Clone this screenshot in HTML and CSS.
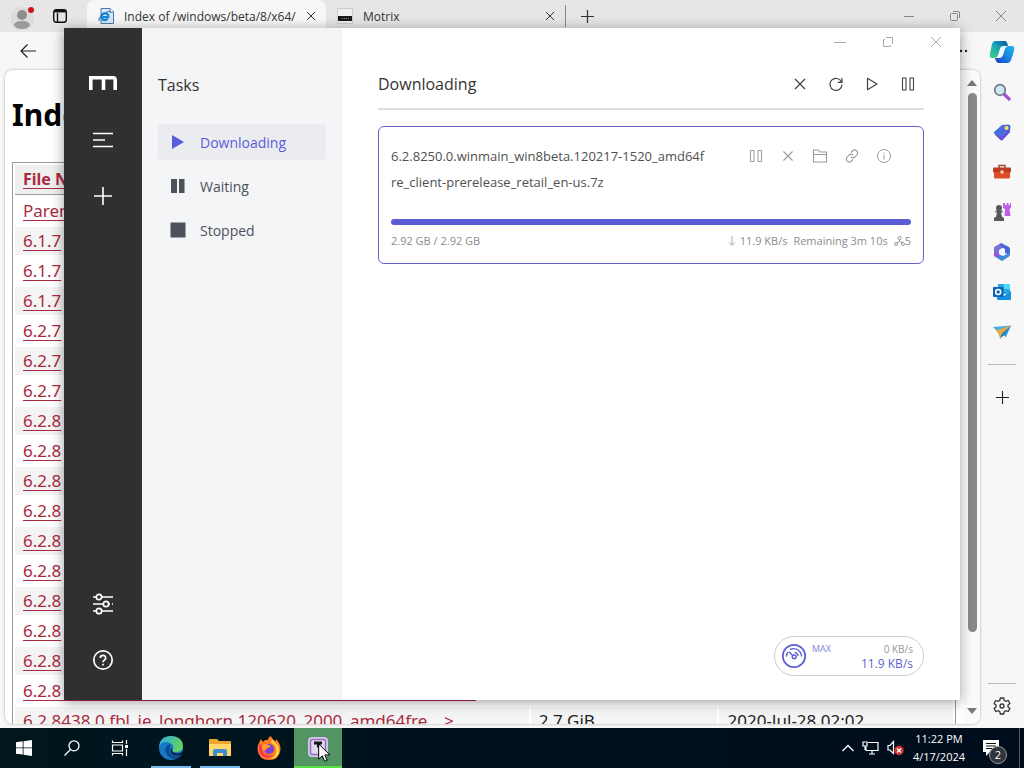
FILE: index.html
```html
<!DOCTYPE html>
<html lang="en">
<head>
<meta charset="utf-8">
<title>Desktop</title>
<link rel="stylesheet" href="styles.css">
</head>
<body>
<div class="desktop">
  <div class="browser">
    <header class="tabbar">
      <button class="profile" aria-label="Profile">
        <svg width="24" height="28" viewBox="0 0 24 28"><circle cx="11" cy="17" r="12" fill="#dcdcdc"/><circle cx="11" cy="13" r="5" fill="#8e8e8e"/><path d="M3 23.500q0-4.500 8-4.500t8 4.500q-3 3.500-8 3.500t-8-3.500z" fill="#9a9a9a"/><circle cx="20" cy="8" r="3" fill="#d0141c"/></svg>
      </button>
      <button class="tab-actions" aria-label="Tab actions">
        <svg width="16" height="16" viewBox="0 0 16 16" fill="none" stroke="#111" stroke-width="1.400"><rect x="1.700" y="1.700" width="12.600" height="12.600" rx="2.500"/><path d="M2 3.500h12M5.500 5v9" /><path d="M2 3h12" stroke-width="2.500"/></svg>
      </button>
      <div class="tab tab-active">
        <svg width="16" height="16" viewBox="0 0 16 16"><path d="M3 .5h9l3.500 3.500v11.500H3z" fill="#d6e8f8" stroke="#4a78ac"/><path d="M12 .5v3.500h3.500" fill="#fff" stroke="#4a78ac"/><path d="M11.500 9.200H3.400q.4 3 3.400 3 1.900 0 2.800-1.300M3.400 8.400q.4-3 3.500-3 3.200 0 3.700 3.200" fill="none" stroke="#1689d8" stroke-width="2.200"/><path d="M1 13q-1.500-4 8-9 4-1.500 3.500 1" fill="none" stroke="#2c6cb8"/></svg>
        <span class="tab-title">Index of /windows/beta/8/x64/</span>
        <button class="tab-close" aria-label="Close tab"><svg width="10" height="10" viewBox="0 0 10 10" stroke="#333"><path d="M1 1l8 8M9 1l-8 8"/></svg></button>
      </div>
      <div class="tab">
        <svg width="16" height="16" viewBox="0 0 16 16"><rect x=".5" y=".5" width="15" height="15" fill="#eee" stroke="#ccc"/><path d="M1 8h14v5H1z" fill="#16181a"/><path d="M5 10.500h8" stroke="#888" stroke-dasharray="1 1"/></svg>
        <span class="tab-title">Motrix</span>
        <button class="tab-close" aria-label="Close tab"><svg width="10" height="10" viewBox="0 0 10 10" stroke="#333"><path d="M1 1l8 8M9 1l-8 8"/></svg></button>
      </div>
      <button class="new-tab" aria-label="New tab"><svg width="15" height="15" viewBox="0 0 15 15" stroke="#333" stroke-width="1.200"><path d="M7.500 1v13M1 7.500h13"/></svg></button>
      <div class="captions">
        <button aria-label="Minimize"><svg width="10" height="10" viewBox="0 0 10 10" stroke="#888"><path d="M0 5.500h10"/></svg></button>
        <button aria-label="Restore"><svg width="12" height="12" viewBox="0 0 12 12" fill="none" stroke="#888"><rect x="1.500" y="3.500" width="7" height="7" rx="1"/><path d="M4 1.500h5q1.500 0 1.500 1.500v5"/></svg></button>
        <button aria-label="Close"><svg width="12" height="12" viewBox="0 0 12 12" stroke="#888"><path d="M1 1l10 10M11 1L1 11"/></svg></button>
      </div>
    </header>
    <div class="browser-body">
      <div class="browser-main">
        <div class="toolbar">
          <button aria-label="Back"><svg width="18" height="16" viewBox="0 0 18 16" fill="none" stroke="#222" stroke-width="1.200"><path d="M17 8H2M8.500 1.500L2 8l6.500 6.500"/></svg></button>
          <button aria-label="More"><svg width="14" height="4" viewBox="0 0 14 4" fill="#222"><circle cx="2" cy="2" r="1.200"/><circle cx="7" cy="2" r="1.200"/><circle cx="12" cy="2" r="1.200"/></svg></button>
        </div>
        <div class="page">
          <div class="page-content">
            <h1>Index</h1>
            <table class="listing">
              <thead><tr><th class="col-name"><a href="#">File Name</a></th><th class="col-size"></th><th></th></tr></thead>
              <tbody>
                <tr><td><a href="#">Parent</a></td><td></td><td></td></tr>
                <tr><td><a href="#">6.1.7</a></td><td></td><td></td></tr>
                <tr><td><a href="#">6.1.7</a></td><td></td><td></td></tr>
                <tr><td><a href="#">6.1.7</a></td><td></td><td></td></tr>
                <tr><td><a href="#">6.2.7</a></td><td></td><td></td></tr>
                <tr><td><a href="#">6.2.7</a></td><td></td><td></td></tr>
                <tr><td><a href="#">6.2.7</a></td><td></td><td></td></tr>
                <tr><td><a href="#">6.2.8</a></td><td></td><td></td></tr>
                <tr><td><a href="#">6.2.8</a></td><td></td><td></td></tr>
                <tr><td><a href="#">6.2.8</a></td><td></td><td></td></tr>
                <tr><td><a href="#">6.2.8</a></td><td></td><td></td></tr>
                <tr><td><a href="#">6.2.8</a></td><td></td><td></td></tr>
                <tr><td><a href="#">6.2.8</a></td><td></td><td></td></tr>
                <tr><td><a href="#">6.2.8</a></td><td></td><td></td></tr>
                <tr><td><a href="#">6.2.8</a></td><td></td><td></td></tr>
                <tr><td><a href="#">6.2.8</a></td><td></td><td></td></tr>
                <tr><td><a href="#" class="long">6.2.8</a></td><td></td><td></td></tr>
                <tr><td><a href="#">6.2.8438.0.fbl_ie_longhorn.120620_2000_amd64fre_..&gt;</a></td><td>2.7 GiB</td><td>2020-Jul-28 02:02</td></tr>
              </tbody>
            </table>
          </div>
          <div class="scrollbar">
            <svg width="10" height="6" viewBox="0 0 10 6"><path d="M0 6L5 0l5 6z" fill="#777"/></svg>
            <div class="thumb"></div>
            <svg class="arrow-down" width="10" height="6" viewBox="0 0 10 6"><path d="M0 0l5 6 5-6z" fill="#777"/></svg>
          </div>
        </div>
      </div>
      <aside class="sidebar">
        <button aria-label="Copilot"><svg width="26" height="24" viewBox="0 0 26 24"><defs><linearGradient id="ca" x1="0" y1="1" x2="1" y2="0"><stop offset="0" stop-color="#4fd07a"/><stop offset=".5" stop-color="#17a8b8"/><stop offset="1" stop-color="#0a4f9c"/></linearGradient><linearGradient id="cb" x1="0" y1="1" x2="1" y2="0"><stop offset="0" stop-color="#2038c8"/><stop offset=".5" stop-color="#1786e0"/><stop offset="1" stop-color="#22b4f2"/></linearGradient></defs><path d="M6 1h10q2 0 3 5h-4q-3 0-4 3l-2 6q-1 3-4 3H3Q0 18 1 13L3 4q1-3 3-3z" fill="url(#ca)"/><path d="M19 23h-9q-3 0-4-5h4q3 0 4-3l2-6q1-3 4-3h3q3 0 2 5l-3 9q-1 3-3 3z" fill="url(#cb)"/><path d="M12 7q2-1 4 0-1 1-2 5-1 5-5 5 1-1 1.500-5Q11 8 12 7z" fill="#eefaff"/></svg></button>
        <button aria-label="Search"><svg width="18" height="18" viewBox="0 0 18 18"><path d="M11 11l5 5" stroke="#a750d8" stroke-width="3.200" stroke-linecap="round"/><circle cx="7" cy="7" r="5.300" fill="#cfe6f4" stroke="#707880" stroke-width="1.700"/></svg></button>
        <button aria-label="Shopping"><svg width="18" height="18" viewBox="0 0 18 18"><path d="M1 9l8-7 7-.5 1.500 1.500-.5 6-7.500 8q-1 .7-2 0L1.500 11q-1-1-.5-2z" fill="#4a6ce0"/><path d="M1.500 11l6 6q1 .7 2 0L17 9V6L8 14z" fill="#6654d8"/><circle cx="13.500" cy="5" r="2" fill="#ffe35a"/></svg></button>
        <button aria-label="Tools"><svg width="18" height="16" viewBox="0 0 18 16"><path d="M6 4V1.500h6V4" fill="none" stroke="#9a4a35" stroke-width="1.500"/><rect y="3.500" width="18" height="5" rx="1" fill="#b93c20"/><path d="M1 8h16v5q0 1.500-1.500 1.500h-13Q1 14.500 1 13z" fill="#dc4d23"/><rect x="7.500" y="6.500" width="3" height="3" fill="#f5d9bd"/></svg></button>
        <button aria-label="Games"><svg width="18" height="18" viewBox="0 0 18 18"><path d="M10 0h2v2h1.500V0h2v2H17V0h1v5l-1.500 1 1 7h-6l.5-7L10 5z" fill="#c060e8"/><circle cx="6" cy="5" r="3" fill="#55595c"/><path d="M2.500 7.500h7v2H8l.8 4 2.200 1.500V18H1v-3l2.200-1.500.8-4H2.500z" fill="#55595c"/></svg></button>
        <button aria-label="Microsoft 365"><svg width="18" height="18" viewBox="0 0 18 18"><path d="M8 0L2 3.500Q1 4 1 5.500v7L6 14V7l6-3.500z" fill="#7b72d8"/><path d="M8 0l8 4q1 .5 1 2v6l-5-2V6L7.500 3.500z" fill="#4868d8"/><path d="M17 11.500q0 1.500-1 2L10 17.500q-1 .7-2 0L1 13l5-2 4 2 6-3z" fill="#4189db"/><path d="M1 9l5 2v3L2 13.500Q1 13 1 12z" fill="#9d51d5"/><path d="M9 5.500L12 7.200v3.600L9 12.500l-3-1.700V7.200z" fill="#f4f7ff"/></svg></button>
        <button aria-label="Outlook"><svg width="18" height="18" viewBox="0 0 18 18"><path d="M5 1h12v10H5z" fill="#28a8ea"/><path d="M11 1h6v5h-6z" fill="#50d9ff"/><path d="M4 9l7 4 7-5v8q0 1-1 1H5q-1 0-1-1z" fill="#1490df"/><rect y="4" width="10.500" height="10" rx="1" fill="#0f63b5"/><circle cx="5.200" cy="9" r="2.500" fill="none" stroke="#fff" stroke-width="1.600"/></svg></button>
        <button aria-label="Drop"><svg width="18" height="16" viewBox="0 0 18 16"><path d="M0 3l18-1.500L5 8z" fill="#46aee8"/><path d="M18 1.500L13 13 8 10z" fill="#3a98dc"/><path d="M3 6.500l15-5L8.500 10 7 14.500 5 9z" fill="#e8a93e"/><path d="M18 1.500L8.500 10 7 15l3.500-3.500z" fill="#277bb8"/></svg></button>
        <hr>
        <button class="side-add" aria-label="Add"><svg width="13" height="13" viewBox="0 0 13 13" stroke="#222" stroke-width="1.100"><path d="M6.500 0v13M0 6.500h13"/></svg></button>
        <hr class="push">
        <button class="side-settings" aria-label="Settings"><svg width="18" height="18" viewBox="0 0 18 18" fill="none" stroke="#333" stroke-width="1.300" stroke-linejoin="round"><path d="M7.300 1h3.400l.5 2.400 1.600.9 2.400-.8 1.700 3-1.900 1.600v1.800l1.900 1.600-1.700 3-2.400-.8-1.600.9-.5 2.400H7.300l-.5-2.400-1.600-.9-2.400.8-1.700-3L3 9.900V8.100L1.100 6.500l1.700-3 2.400.8 1.600-.9z"/><circle cx="9" cy="9" r="2"/></svg></button>
      </aside>
    </div>
  </div>

  <section class="motrix">
    <nav class="rail">
      <svg class="logo" width="28" height="14" viewBox="0 0 28 14" fill="none" stroke="#fff" stroke-width="3.600"><path d="M1.800 14V1.800H24q2.200 0 2.200 2.200v10M14.500 2v12"/></svg>
      <button aria-label="Task list"><svg width="22" height="16" viewBox="0 0 22 16" stroke="#fff" stroke-width="1.600"><path d="M1 1.500h20M1 8h12M1 14.500h20"/></svg></button>
      <button aria-label="Add task"><svg width="20" height="20" viewBox="0 0 20 20" stroke="#fff" stroke-width="1.600"><path d="M10 1v18M1 10h18"/></svg></button>
      <button class="push" aria-label="Preferences"><svg width="22" height="22" viewBox="0 0 22 22" fill="none" stroke="#fff" stroke-width="1.700"><path d="M1 4h3M10 4h11M1 11h10M17 11h1M20 11h1M1 18h3M10 18h11"/><circle cx="7" cy="4" r="2.700"/><circle cx="14" cy="11" r="2.700"/><circle cx="7" cy="18" r="2.700"/></svg></button>
      <button aria-label="Help"><svg width="22" height="22" viewBox="0 0 22 22" fill="none" stroke="#fff" stroke-width="1.700"><circle cx="11" cy="11" r="9.200"/><path d="M8.300 9q0-2.700 2.700-2.700T13.700 9q0 1.500-1.500 2.200Q11 11.800 11 13.300M11 14.800v1.600"/></svg></button>
    </nav>
    <aside class="subnav">
      <h2>Tasks</h2>
      <a href="#" class="nav-item current"><svg width="16" height="16" viewBox="0 0 16 16"><path d="M2 1l12 7-12 7z" fill="#5b5be0"/></svg>Downloading</a>
      <a href="#" class="nav-item"><svg width="16" height="16" viewBox="0 0 16 16"><path d="M1 1h6v14H1zM9 1h5.500v14H9z" fill="#4d515a"/></svg>Waiting</a>
      <a href="#" class="nav-item"><svg width="16" height="16" viewBox="0 0 16 16"><path d="M.5.500h15v15H.5z" fill="#4d515a"/></svg>Stopped</a>
    </aside>
    <main class="panel">
      <div class="win-controls">
        <button aria-label="Minimize"><svg width="12" height="12" viewBox="0 0 12 12" stroke="#aaa"><path d="M0 6.500h12"/></svg></button>
        <button aria-label="Maximize"><svg width="12" height="12" viewBox="0 0 12 12" fill="none" stroke="#aaa"><path d="M4 1.500h6.500V8M1.500 4v6.500H8M1.500 4v-.5H3M8.500 10.500V9"/></svg></button>
        <button aria-label="Close"><svg width="12" height="12" viewBox="0 0 12 12" stroke="#aaa"><path d="M1 1l10 10M11 1L1 11"/></svg></button>
      </div>
      <header class="panel-head">
        <h2>Downloading</h2>
        <div class="tools">
          <button aria-label="Delete"><svg width="14" height="14" viewBox="0 0 14 14" stroke="#444" stroke-width="1.300"><path d="M2 2l10 10M12 2L2 12"/></svg></button>
          <button aria-label="Refresh"><svg width="14" height="14" viewBox="0 0 14 14" fill="none" stroke="#444" stroke-width="1.200"><path d="M12.500 5A6 6 0 1 0 13 7.500M13 1v4.300H8.800"/></svg></button>
          <button aria-label="Resume all"><svg width="14" height="14" viewBox="0 0 14 14" fill="none" stroke="#444" stroke-width="1.200" stroke-linejoin="round"><path d="M2.500 1.300l9.500 5.700-9.500 5.700z"/></svg></button>
          <button aria-label="Pause all"><svg width="14" height="14" viewBox="0 0 14 14" fill="none" stroke="#444" stroke-width="1.100"><path d="M1.500 1h3.500v12H1.500zM9 1h3.500v12H9z"/></svg></button>
        </div>
      </header>
      <article class="task">
        <div class="task-top">
          <h3>6.2.8250.0.winmain_win8beta.120217-1520_amd64fre_client-prerelease_retail_en-us.7z</h3>
          <div class="task-actions">
            <button aria-label="Pause"><svg width="14" height="14" viewBox="0 0 14 14" fill="none" stroke="#999"><path d="M1.500 1.500h3.500v11H1.500zM9 1.500h3.500v11H9z"/></svg></button>
            <button aria-label="Delete"><svg width="14" height="14" viewBox="0 0 14 14" stroke="#999" stroke-width="1.100"><path d="M2.500 2.500l9 9M11.500 2.500l-9 9"/></svg></button>
            <button aria-label="Open folder"><svg width="16" height="16" viewBox="0 0 16 16" fill="none" stroke="#999" stroke-width="1.100"><path d="M1.500 14V2h5l1.500 2h6.500v10zM1.500 6.500h13"/></svg></button>
            <button aria-label="Copy link"><svg width="14" height="14" viewBox="0 0 14 14" fill="none" stroke="#999" stroke-width="1.100"><path d="M6 3.500l2-2q1.700-1.300 3.700.4 1.800 2 .3 3.900L9.500 8.300q-1.800 1.300-3.600-.3M8 10.500l-2 2q-1.700 1.300-3.700-.4-1.800-2-.3-3.900L4.500 5.700q1.800-1.300 3.600.3"/></svg></button>
            <button aria-label="Details"><svg width="16" height="16" viewBox="0 0 16 16" fill="none" stroke="#999"><circle cx="8" cy="8" r="6.500"/><path d="M8 7v4.500M8 4.500v1.200"/></svg></button>
          </div>
        </div>
        <div class="progress" role="progressbar" aria-valuenow="100" aria-label="Progress"></div>
        <div class="task-info">
          <span>2.92 GB / 2.92 GB</span>
          <div class="stats">
            <svg width="8" height="12" viewBox="0 0 8 12" fill="none" stroke="#aaa"><path d="M4 1v9M1 7.500l3 3 3-3"/></svg>
            <span class="speed">11.9 KB/s</span>
            <span class="remain">Remaining 3m 10s</span>
            <svg width="11" height="12" viewBox="0 0 11 12" fill="none" stroke="#999"><circle cx="5.500" cy="3" r="1.600"/><circle cx="2" cy="9" r="1.500"/><circle cx="9" cy="9" r="1.500"/><path d="M5.500 4.600v2L2.800 7.700M5.500 6.600l2.700 1.100"/></svg>
            <span>5</span>
          </div>
        </div>
      </article>
      <div class="speedometer">
        <svg width="26" height="26" viewBox="0 0 26 26" fill="none" stroke="#5f5fd4" stroke-width="1.700"><circle cx="13" cy="13" r="11.200"/><path d="M5.400 13.500q0-2.500 1.600-4.500M9 6.500q4.500-2 8 .5 3.500 2.500 3.600 6.500M8 8.800l3.700 3.700" stroke-width="1.400"/><path d="M13.500 9.300q3 .5 3.700 3.700" stroke-width="1.200"/><circle cx="13.200" cy="13.800" r="1.900" stroke-width="1.500"/></svg>
        <span class="max">MAX</span>
        <div class="rates"><span class="up">0 KB/s</span><span class="down">11.9 KB/s</span></div>
      </div>
    </main>
  </section>

  <footer class="taskbar">
    <button aria-label="Start"><svg width="16" height="16" viewBox="0 0 16 16" fill="#fff"><path d="M0 2.300L6.700 1.300v6.200H0zM7.500 1.200L16 0v7.500H7.500zM0 8.300h6.700v6.300L0 13.700zM7.500 8.300H16V16l-8.500-1.200z"/></svg></button>
    <button aria-label="Search"><svg width="16" height="16" viewBox="0 0 16 16" fill="none" stroke="#fff" stroke-width="1.300"><circle cx="10" cy="5.800" r="5"/><path d="M6.500 9.500L.5 15.500"/></svg></button>
    <button aria-label="Task view"><svg width="18" height="16" viewBox="0 0 18 16" fill="none" stroke="#fff" stroke-width="1.200"><path d="M1.500.5v2h10v-2M1.500 15.500v-2h10v2M1.500 5h10v6h-10zM15.500 0v4M15.500 9v7"/><path d="M14 5h3v3h-3z" fill="#fff" stroke="none"/></svg></button>
    <div class="apps">
      <button class="open" aria-label="Edge"><svg width="24" height="24" viewBox="0 0 24 24"><defs><linearGradient id="ea" x1="0" y1="0" x2="1" y2=".3"><stop offset="0" stop-color="#2da8df"/><stop offset="1" stop-color="#62d463"/></linearGradient></defs><circle cx="12" cy="12" r="12" fill="#1778c8"/><path d="M0 11Q1 0 12 0q11 0 12 10 0 6-7 6-4 0-3.500-2 2-2 0-5Q11 6 7 6 2 6 0 11z" fill="url(#ea)"/><path d="M9 9q-4 3-2 8 3 6 10 6 4-1 6-5-4 3-9 1-5-2-3-8 1-2 0-3z" fill="#0c4b8c"/><path d="M13 12q-1 3 2 5 4 2 8-1l1-1v3l-4 1q-6 1-8-3-1-3 1-4z" fill="#04162a"/></svg></button>
      <button class="open" aria-label="File Explorer"><svg width="22" height="20" viewBox="0 0 22 20"><path d="M0 2q0-1 1-1h7l2 2h11q1 0 1 1v14H0z" fill="#e8a72e"/><path d="M0 6h22v12H0z" fill="#ffd66b"/><path d="M4 18v-5q0-2 2-2h10q2 0 2 2v5h-4v-3H8v3z" fill="#3b8fd0"/></svg></button>
      <button aria-label="Firefox"><svg width="24" height="24" viewBox="0 0 24 24"><path d="M2 7l2-4 2 3q2-3 5-2 0-3 3-4 1 4 5 5V3q5 5 4.500 11Q22 24 12 24T.5 14Q0 10 2 7z" fill="#ff7a24"/><path d="M15 2q1 4 5 6 3 4 2 9-2 6-9 6 7-3 6-10-1-5-5-6z" fill="#ffd13e"/><path d="M2 9q-1 9 5 12 6 2 10-2-8 2-11-3-2-4 1-8z" fill="#f23950"/><circle cx="12" cy="13" r="5" fill="#7b3fd6"/><path d="M5 9q3-2 6 0l3 1q-1 2-4 2l-2 3Q4 13 5 9z" fill="#ff9b2f"/></svg></button>
      <button class="open active" aria-label="Motrix"><svg width="20" height="20" viewBox="0 0 20 20"><rect width="20" height="20" rx="4" fill="#d8c4ee"/><rect x="2.500" y="2.500" width="15" height="15" rx="2" fill="#e2d6ee" stroke="#9274b8" stroke-width="1.500"/><path d="M6 4.500h8v3h-2v3H9v-3H6z" fill="#1b1622"/></svg></button>
    </div>
    <div class="tray">
      <svg width="12" height="8" viewBox="0 0 12 8" fill="none" stroke="#fff" stroke-width="1.300"><path d="M.5 7L6 1.500 11.500 7"/></svg>
      <svg width="17" height="14" viewBox="0 0 17 14" fill="none" stroke="#fff" stroke-width="1.200"><path d="M6 1.500h10v8H4V6M7 13h6M10 9.500V13M1 1h4v4H1zM3 5v4"/></svg>
      <svg width="17" height="16" viewBox="0 0 17 16"><path d="M1 5.500h2l3.500-4v12L3 10H1z" fill="none" stroke="#fff" stroke-width="1.200"/><circle cx="12" cy="10.500" r="4.700" fill="#d13438"/><path d="M10 8.500l4 4M14 8.500l-4 4" stroke="#fff" stroke-width="1.200"/></svg>
    </div>
    <time class="clock" datetime="2024-04-17T23:22"><span>11:22 PM</span><span>4/17/2024</span></time>
    <button class="notify" aria-label="Notifications, 2 new">
      <svg width="16" height="16" viewBox="0 0 16 16"><path d="M0 0h16v12H7l-4 4v-4H0z" fill="#fff"/><path d="M3 3.500h10M3 6h10M3 8.500h10" stroke="#08101c"/></svg>
      <span class="badge">2</span>
    </button>
    <svg class="cursor" width="13" height="20" viewBox="0 0 13 20"><path d="M.7.900v15.300l3.600-3.400 2.400 5.600 2.500-1.100-2.400-5.400h5z" fill="#fff" stroke="#000"/></svg>
  </footer>
</div>
</body>
</html>
```
FILE: styles.css
```css
* { box-sizing: border-box; }
body { margin: 0; font-family: "Open Sans", "Noto Sans", sans-serif; font-size: 12px; color: #333; }
button { display: flex; align-items: center; justify-content: center; padding: 0; border: 0; background: none; font: inherit; color: inherit; }
svg { display: block; flex: none; }
h1, h2, h3 { margin: 0; font-weight: 400; }
.push { margin-top: auto; }

.desktop { position: relative; display: flex; flex-direction: column; height: 100vh; overflow: hidden; }
.browser { flex: 1; min-height: 0; display: flex; flex-direction: column; background: #f7f7f7; }

.tabbar { flex: none; display: flex; height: 32px; background: #e6e6e6; }
.profile { width: 24px; margin-left: 11px; overflow: hidden; }
.tab-actions { width: 16px; margin: 0 19px 0 17px; }
.tab { display: flex; align-items: center; gap: 10px; width: 239px; padding: 0 10px 0 11px; }
.tab-active { background: #f7f7f7; border-radius: 8px 8px 0 0; }
.tab-title { flex: 1; white-space: nowrap; }
.tab-close { width: 10px; height: 16px; }
.new-tab { width: 43px; border-left: 1px solid #888; height: 22px; margin-top: 5px; }
.captions { display: flex; margin-left: auto; }
.captions button { width: 46px; }

.browser-body { flex: 1; min-height: 0; display: flex; }
.browser-main { flex: 1; min-width: 0; display: flex; flex-direction: column; padding: 0 0 4px 5px; }
.toolbar { flex: none; display: flex; align-items: center; justify-content: space-between; height: 38px; padding: 0 12px 0 14px; }
.page { flex: 1; min-height: 0; display: flex; overflow: hidden; background: #fff; border-radius: 8px; box-shadow: 0 0 3px rgba(0, 0, 0, 0.3); }
.page-content { flex: 1; min-width: 0; padding: 20px 8px 0 7px; font-family: "Noto Sans", sans-serif; font-size: 17px; color: #222; }
.page-content h1 { height: 72px; font-size: 30px; line-height: 50px; font-weight: 700; color: #000; }
.listing { width: 100%; table-layout: fixed; border: 1px solid #999; border-spacing: 2px; }
.listing th, .listing td { height: 28px; padding: 0 8px; line-height: 28px; text-align: left; vertical-align: top; white-space: nowrap; }
.listing th { height: 30px; background: #efefef; border-bottom: 1px solid #999; font-size: 16px; }
.listing tbody tr:nth-child(even) td { background: #f4f4f4; }
.listing a { color: #a92a40; text-underline-offset: 3px; text-decoration-thickness: 1px; }
.listing .long { display: block; width: 91%; height: 24px; border-bottom: 1px solid #a92a40; text-decoration: none; }
.col-name { width: 55%; }
.col-size { width: 20%; }
.scrollbar { flex: none; display: flex; flex-direction: column; align-items: center; width: 16px; padding: 10px 0; background: #fafafa; }
.thumb { width: 9px; height: 85%; margin-top: 7px; border-radius: 5px; background: #898989; }
.arrow-down { margin-top: auto; }

.sidebar { flex: none; display: flex; flex-direction: column; align-items: center; width: 44px; }
.sidebar button { width: 40px; height: 40px; }
.sidebar hr { width: 28px; margin-bottom: 0; border: 0; border-top: 1px solid #bbb; }
.sidebar hr:not(.push) { margin-top: 12px; }
.sidebar .side-add { margin-top: 12px; }
.sidebar .side-settings { height: 44px; }

.motrix { position: absolute; top: 28px; right: 64px; bottom: 68px; left: 64px; display: flex; background: #fff; box-shadow: 0 2px 12px rgba(0, 0, 0, 0.4); }
.rail { flex: none; display: flex; flex-direction: column; align-items: center; width: 78px; padding: 48px 0 12px; background: #303030; }
.logo { margin-bottom: 22px; }
.rail button { width: 56px; height: 56px; }
.subnav { flex: none; width: 200px; padding: 44px 16px 0; background: #f4f5f7; }
.subnav h2 { margin-bottom: 26px; font-size: 16px; line-height: 26px; }
.nav-item { display: flex; align-items: center; gap: 14px; height: 36px; margin-bottom: 8px; padding: 0 12px; border-radius: 3px; font-size: 14px; color: #4d515a; text-decoration: none; }
.nav-item.current { color: #5b5bdc; background: #eaecf0; }

.panel { flex: 1; min-width: 0; display: flex; flex-direction: column; padding: 0 36px 24px; }
.win-controls { display: flex; justify-content: flex-end; margin-right: -36px; }
.win-controls button { width: 48px; height: 28px; }
.panel-head { display: flex; align-items: center; justify-content: space-between; height: 54px; padding-top: 4px; margin-bottom: 16px; border-bottom: 2px solid #ddd; }
.panel-head h2 { font-size: 16px; }
.tools { display: flex; gap: 22px; padding-right: 9px; }
.task { padding: 16px 12px 13px; border: 1px solid #6464c8; border-radius: 6px; }
.task-top { display: flex; justify-content: space-between; margin-bottom: 24px; }
.task h3 { width: 316px; font-size: 13px; line-height: 26px; color: #505050; word-break: break-all; }
.task-actions { display: flex; align-items: center; height: 26px; padding-right: 11px; }
.task-actions button { width: 32px; height: 24px; }
.progress { height: 6px; border-radius: 3px; background: #5b5bd6; }
.task-info { display: flex; align-items: center; justify-content: space-between; margin-top: 7px; font-size: 11px; line-height: 18px; color: #8c8c8c; }
.stats { display: flex; align-items: center; }
.speed { margin: 0 6px 0 4px; }
.remain { margin-right: 6px; }
.speedometer { display: flex; align-self: flex-end; width: 150px; height: 40px; margin-top: auto; padding: 6px 10px 0 6px; border: 1px solid #ccc; border-radius: 20px; }
.max { margin-left: 5px; font-size: 9px; line-height: 12px; color: #8484d8; }
.rates { display: flex; flex-direction: column; align-items: flex-end; margin-left: auto; }
.up { font-size: 10px; line-height: 12px; color: #999; }
.down { font-size: 12px; line-height: 17px; color: #5f5fd4; }

.taskbar { position: relative; flex: none; display: flex; height: 40px; background: linear-gradient(90deg, #00171e, #000c1c); color: #fff; }
.taskbar button { width: 48px; height: 40px; }
.apps { display: flex; gap: 1px; margin-left: 3px; }
.apps .open { background: linear-gradient(#76b9ed, #76b9ed) center bottom / 40px 2px no-repeat; }
.apps .active { background: #539463; border-bottom: 2px solid #55e043; }
.tray { display: flex; align-items: center; gap: 8px; margin-left: auto; }
.clock { display: flex; flex-direction: column; align-items: center; justify-content: center; width: 70px; font-size: 11px; line-height: 18px; white-space: nowrap; }
.taskbar .notify { position: relative; width: 46px; margin-right: 4px; border-right: 1px solid #556; }
.notify svg { margin-right: 12px; }
.badge { position: absolute; right: 12px; bottom: 4px; width: 18px; height: 18px; border: 1px solid #999; border-radius: 50%; background: #30343c; font-size: 11px; line-height: 16px; text-align: center; }
.cursor { position: absolute; left: 318px; top: 15px; }
```
